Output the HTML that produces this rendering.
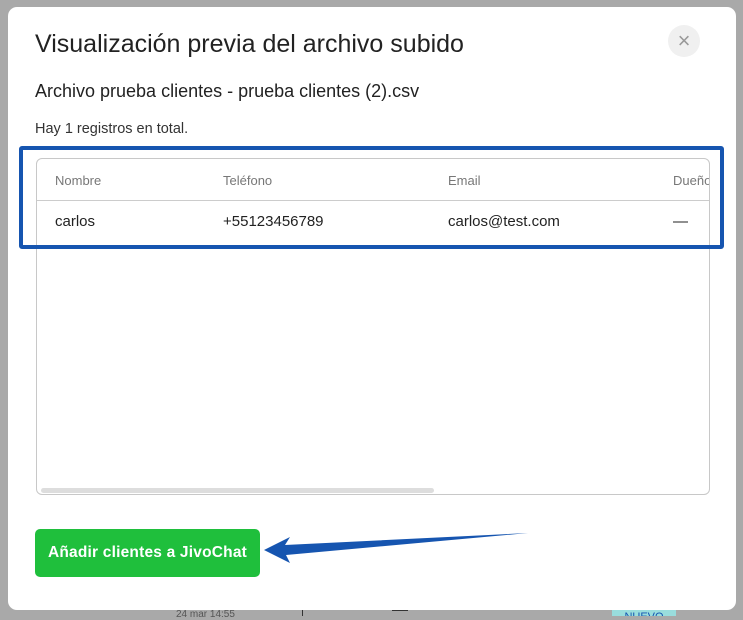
<!DOCTYPE html>
<html><head><style>
body{margin:0;width:743px;height:616px;background:#a9a9a9;font-family:"Liberation Sans",sans-serif;position:relative;overflow:hidden}
.m{position:absolute;left:8px;top:7px;width:728px;height:603px;background:#fff;border-radius:9px}
.t{position:absolute;left:35px;top:30px;font-size:25px;color:#222}
.x{position:absolute;left:668px;top:25px;width:32px;height:32px;border-radius:50%;background:#f0f0f0;color:#999;font-size:22px;text-align:center;line-height:31px}
.s{position:absolute;left:35px;top:81px;font-size:18px;color:#222}
.h{position:absolute;left:35px;top:121px;font-size:14.5px;color:#333}
.tb{position:absolute;left:36px;top:158px;width:672px;height:335px;border:1px solid #c8c8c8;border-radius:6px;overflow:hidden}
.r{position:absolute;left:0;width:672px;height:41px;font-size:15px}
.r span{position:absolute;top:12px}
.sb{position:absolute;left:4px;top:329px;width:393px;height:5px;border-radius:3px;background:#ddd}
.btn{position:absolute;left:35px;top:529px;width:225px;height:48px;background:#1fbf3c;border-radius:5px;color:#fff;font-weight:bold;font-size:15.5px;text-align:center;line-height:48px;letter-spacing:0.2px}
.hl{position:absolute;left:19px;top:146px;width:697px;height:95px;border:4px solid #1655b0;border-radius:3px}
</style></head><body>
<div style="position:absolute;left:176px;top:609px;font-size:10px;color:#555">24 mar 14:55</div>
<div style="position:absolute;left:302px;top:609px;width:1px;height:7px;background:#333"></div>
<div style="position:absolute;left:392px;top:610px;width:16px;height:1px;background:#333"></div>
<div style="position:absolute;left:612px;top:609px;width:64px;height:7px;background:#9dd;font-size:11px;color:#1655b0;text-align:center;line-height:16px;overflow:hidden">NUEVO</div>
<div class="m"></div>
<div class="t">Visualización previa del archivo subido</div>
<div class="x">×</div>
<div class="s">Archivo prueba clientes - prueba clientes (2).csv</div>
<div class="h">Hay 1 registros en total.</div>
<div class="tb">
<div class="r" style="top:0;border-bottom:1px solid #ccc;color:#777;font-size:13px"><span style="left:18px;top:14px">Nombre</span><span style="left:186px;top:14px">Teléfono</span><span style="left:411px;top:14px">Email</span><span style="left:636px;top:14px">Dueño</span></div>
<div class="r" style="top:42px;color:#222"><span style="left:18px">carlos</span><span style="left:186px">+55123456789</span><span style="left:411px">carlos@test.com</span><span style="left:636px">—</span></div>
<div class="sb"></div>
</div>
<div class="hl"></div>
<div class="btn">Añadir clientes a JivoChat</div>
<svg style="position:absolute;left:0;top:0" width="743" height="616"><path d="M528 533 L285 545 L290 537 L264 550 L290 563 L286 555 Z" fill="#1655b0"/></svg>
</body></html>
